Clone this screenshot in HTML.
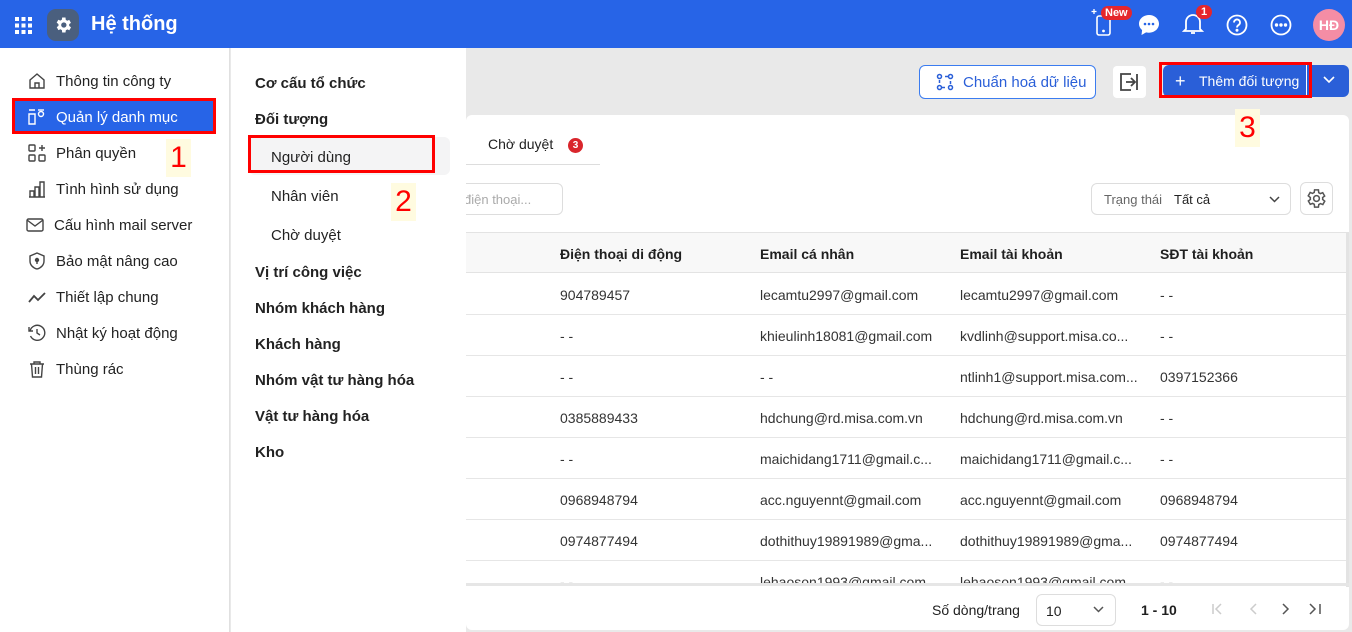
<!DOCTYPE html>
<html><head><meta charset="utf-8">
<style>
*{box-sizing:border-box;margin:0;padding:0}
body{width:1352px;height:632px;overflow:hidden;font-family:"Liberation Sans",sans-serif;background:#e9e9e9;position:relative;color:#1f1f1f}
.abs{position:absolute}
.hdr{left:0;top:0;width:1352px;height:48px;background:#2764e7}
.side{left:0;top:48px;width:230px;height:584px;background:#fff;border-right:1px solid #e0e0e0}
.sub{left:231px;top:48px;width:235px;height:584px;background:#fff}
.si{position:absolute;left:28px;font-size:15px;color:#222;display:flex;align-items:center}
.si svg{margin-right:10px}
.sm{position:absolute;font-size:15px;font-weight:bold;color:#222}
.sm2{position:absolute;left:271px;font-size:15px;color:#222}
.card{left:466px;top:115px;width:883px;height:515px;background:#fff;border-radius:6px}
.th{font-size:14px;font-weight:bold;position:absolute;top:246px}
.row{position:absolute;left:466px;width:880px;height:41px;border-bottom:1px solid #e6e6e6}
.c{position:absolute;font-size:14px;color:#333;top:13px}
.red{position:absolute;border:3px solid #f00}
.num{position:absolute;background:#fffbe0;color:#f00;font-size:30px;text-align:center}
svg{display:block}
</style></head><body>
<div class="abs hdr"></div>
<svg class="abs" style="left:15px;top:17px" width="17" height="17" viewBox="0 0 17 17" fill="#fff"><rect x="0" y="0" width="4" height="4"/><rect x="6.5" y="0" width="4" height="4"/><rect x="13" y="0" width="4" height="4"/><rect x="0" y="6.5" width="4" height="4"/><rect x="6.5" y="6.5" width="4" height="4"/><rect x="13" y="6.5" width="4" height="4"/><rect x="0" y="13" width="4" height="4"/><rect x="6.5" y="13" width="4" height="4"/><rect x="13" y="13" width="4" height="4"/></svg>
<div class="abs" style="left:47px;top:9px;width:32px;height:32px;border-radius:9px;background:#4a5f7e"></div>
<svg class="abs" style="left:53px;top:15px" width="20" height="20" viewBox="0 0 24 24"><path fill="#fff" d="M19.4 13a7.5 7.5 0 000-2l2.1-1.6-2-3.5-2.5 1a7.6 7.6 0 00-1.7-1L15 3h-4l-.4 2.7a7.6 7.6 0 00-1.7 1l-2.5-1-2 3.5L6.6 11a7.5 7.5 0 000 2l-2.1 1.6 2 3.5 2.5-1c.5.4 1.1.7 1.7 1L11 21h4l.4-2.7c.6-.3 1.2-.6 1.7-1l2.5 1 2-3.5z"/><circle cx="13" cy="12" r="3.2" fill="#4a5f7e"/></svg>
<div class="abs" style="left:91px;top:13px;font-size:20px;font-weight:bold;color:#fff">Hệ thống</div>
<svg class="abs" style="left:1090px;top:6px" width="30" height="32" viewBox="0 0 30 32" fill="none" stroke="#fff" stroke-width="1.6"><rect x="7" y="10" width="13" height="19" rx="2"/><circle cx="13.5" cy="25" r=".6" fill="#fff"/><path d="M4 3v5M1.5 5.5h5" stroke-width="1.3"/></svg>
<div class="abs" style="left:1101px;top:6px;background:#e5262c;color:#fff;font-size:11px;font-weight:bold;border-radius:8px;padding:1px 4px">New</div>
<svg class="abs" style="left:1138px;top:14px" width="22" height="22" viewBox="0 0 22 22"><path fill="#fff" d="M11 1C5.5 1 1 4.9 1 9.8c0 2.5 1.2 4.7 3.1 6.3L3.5 21l4.6-2.6c.9.2 1.9.3 2.9.3 5.5 0 10-3.9 10-8.9S16.5 1 11 1z"/><circle cx="7" cy="10" r="1.3" fill="#2764e7"/><circle cx="11" cy="10" r="1.3" fill="#2764e7"/><circle cx="15" cy="10" r="1.3" fill="#2764e7"/></svg>
<svg class="abs" style="left:1182px;top:12px" width="22" height="24" viewBox="0 0 22 24" fill="none" stroke="#fff" stroke-width="1.8"><path d="M4 17V10a7 7 0 0114 0v7l2 2H2z"/><path d="M9 21h4"/></svg>
<div class="abs" style="left:1196px;top:5px;background:#e5262c;color:#fff;font-size:11px;font-weight:bold;border-radius:8px;padding:1px 5px">1</div>
<svg class="abs" style="left:1226px;top:14px" width="22" height="22" viewBox="0 0 22 22" fill="none" stroke="#fff" stroke-width="1.8"><circle cx="11" cy="11" r="9.5"/><path d="M8 8.5a3 3 0 115 2.2c-1.3.8-2 1.3-2 2.8"/><circle cx="11" cy="16.3" r=".6" fill="#fff"/></svg>
<svg class="abs" style="left:1270px;top:14px" width="22" height="22" viewBox="0 0 22 22" fill="none" stroke="#fff" stroke-width="1.8"><circle cx="11" cy="11" r="9.5"/><circle cx="6.5" cy="11" r=".8" fill="#fff"/><circle cx="11" cy="11" r=".8" fill="#fff"/><circle cx="15.5" cy="11" r=".8" fill="#fff"/></svg>
<div class="abs" style="left:1313px;top:9px;width:32px;height:32px;border-radius:50%;background:#f48da5;color:#fff;font-weight:bold;font-size:14px;text-align:center;line-height:32px">HĐ</div>

<!-- top buttons -->
<div class="abs" style="left:919px;top:65px;width:177px;height:34px;border:1px solid #3b7cf0;border-radius:6px;background:#fff"></div>
<svg class="abs" style="left:936px;top:73px" width="18" height="18" viewBox="0 0 18 18" fill="none" stroke="#2a5fd8" stroke-width="1.5"><circle cx="3.5" cy="3.5" r="2"/><circle cx="14.5" cy="14.5" r="2"/><circle cx="3.5" cy="14.5" r="2"/><circle cx="14.5" cy="3.5" r="2"/><path d="M9 3.5h3M9 14.5h-3M3.5 7v3M14.5 11V8"/></svg>
<div class="abs" style="left:963px;top:74px;font-size:15px;color:#2a5fd8">Chuẩn hoá dữ liệu</div>
<div class="abs" style="left:1113px;top:66px;width:33px;height:32px;background:#fff;border-radius:4px"></div>
<svg class="abs" style="left:1120px;top:73px" width="19" height="18" viewBox="0 0 19 18" fill="none" stroke="#444" stroke-width="1.8"><path d="M11 1H1v16h10M1 1v16M17 1v16M6 9h9M11 5l4 4-4 4"/></svg>
<div class="abs" style="left:1163px;top:65px;width:186px;height:32px;background:#2a5fd8;border-radius:6px"></div>
<div class="abs" style="left:1306px;top:65px;width:1px;height:32px;background:#fff"></div>
<div class="abs" style="left:1175px;top:71px;font-size:18px;color:#fff">+</div>
<div class="abs" style="left:1199px;top:73px;font-size:14px;color:#fff">Thêm đối tượng</div>
<svg class="abs" style="left:1323px;top:76px" width="12" height="8" viewBox="0 0 12 8" fill="none" stroke="#fff" stroke-width="1.6"><path d="M1 1l5 5 5-5"/></svg>

<!-- card -->
<div class="abs card"></div>
<div class="abs" style="left:488px;top:136px;font-size:14px">Chờ duyệt</div>
<div class="abs" style="left:568px;top:138px;width:15px;height:15px;border-radius:50%;background:#d9262c;color:#fff;font-size:10px;font-weight:bold;text-align:center;line-height:15px">3</div>
<div class="abs" style="left:466px;top:164px;width:134px;height:1px;background:#ddd"></div>
<div class="abs" style="left:440px;top:183px;width:123px;height:32px;border:1px solid #ddd;border-radius:6px;background:#fff"></div>
<div class="abs" style="left:464px;top:192px;font-size:13px;color:#aaa">điện thoại...</div>
<div class="abs" style="left:1091px;top:183px;width:200px;height:32px;border:1px solid #ddd;border-radius:6px"></div>
<div class="abs" style="left:1104px;top:192px;font-size:13px;color:#666">Trạng thái</div>
<div class="abs" style="left:1174px;top:192px;font-size:13px;color:#222">Tất cả</div>
<svg class="abs" style="left:1269px;top:196px" width="11" height="7" viewBox="0 0 11 7" fill="none" stroke="#444" stroke-width="1.5"><path d="M1 1l4.5 4.5L10 1"/></svg>
<div class="abs" style="left:1300px;top:182px;width:33px;height:33px;border:1px solid #ddd;border-radius:6px"></div>
<svg class="abs" style="left:1305px;top:187px" width="23" height="23" viewBox="0 0 24 24" fill="none" stroke="#555" stroke-width="1.6"><path d="M19.4 13a7.5 7.5 0 000-2l2.1-1.6-2-3.5-2.5 1a7.6 7.6 0 00-1.7-1L15 3h-4l-.4 2.7a7.6 7.6 0 00-1.7 1l-2.5-1-2 3.5L6.6 11a7.5 7.5 0 000 2l-2.1 1.6 2 3.5 2.5-1c.5.4 1.1.7 1.7 1L11 21h4l.4-2.7c.6-.3 1.2-.6 1.7-1l2.5 1 2-3.5z" transform="translate(-1 0)"/><circle cx="12" cy="12" r="3"/></svg>

<div class="abs" style="left:466px;top:232px;width:880px;height:41px;background:#f8f8f8;border-top:1px solid #e3e3e3;border-bottom:1px solid #e3e3e3"></div>
<div class="th" style="left:560px">Điện thoại di động</div>
<div class="th" style="left:760px">Email cá nhân</div>
<div class="th" style="left:960px">Email tài khoản</div>
<div class="th" style="left:1160px">SĐT tài khoản</div>
<div class="abs" style="left:1346px;top:232px;width:3px;height:355px;background:#e3e3e3"></div>

<div class="row" style="top:274px"><div class="c" style="left:94px">904789457</div><div class="c" style="left:294px">lecamtu2997@gmail.com</div><div class="c" style="left:494px">lecamtu2997@gmail.com</div><div class="c" style="left:694px">- -</div></div>
<div class="row" style="top:315px"><div class="c" style="left:94px">- -</div><div class="c" style="left:294px">khieulinh18081@gmail.com</div><div class="c" style="left:494px">kvdlinh@support.misa.co...</div><div class="c" style="left:694px">- -</div></div>
<div class="row" style="top:356px"><div class="c" style="left:94px">- -</div><div class="c" style="left:294px">- -</div><div class="c" style="left:494px">ntlinh1@support.misa.com...</div><div class="c" style="left:694px">0397152366</div></div>
<div class="row" style="top:397px"><div class="c" style="left:94px">0385889433</div><div class="c" style="left:294px">hdchung@rd.misa.com.vn</div><div class="c" style="left:494px">hdchung@rd.misa.com.vn</div><div class="c" style="left:694px">- -</div></div>
<div class="row" style="top:438px"><div class="c" style="left:94px">- -</div><div class="c" style="left:294px">maichidang1711@gmail.c...</div><div class="c" style="left:494px">maichidang1711@gmail.c...</div><div class="c" style="left:694px">- -</div></div>
<div class="row" style="top:479px"><div class="c" style="left:94px">0968948794</div><div class="c" style="left:294px">acc.nguyennt@gmail.com</div><div class="c" style="left:494px">acc.nguyennt@gmail.com</div><div class="c" style="left:694px">0968948794</div></div>
<div class="row" style="top:520px"><div class="c" style="left:94px">0974877494</div><div class="c" style="left:294px">dothithuy19891989@gma...</div><div class="c" style="left:494px">dothithuy19891989@gma...</div><div class="c" style="left:694px">0974877494</div></div>
<div class="row" style="top:561px;height:22px;overflow:hidden;border:none"><div class="c" style="left:94px">- -</div><div class="c" style="left:294px">lehaoson1993@gmail.com</div><div class="c" style="left:494px">lehaoson1993@gmail.com</div><div class="c" style="left:694px">- -</div></div>
<div class="abs" style="left:466px;top:583px;width:883px;height:3px;background:#e6e6e6"></div>

<div class="abs" style="left:932px;top:602px;font-size:14px">Số dòng/trang</div>
<div class="abs" style="left:1036px;top:594px;width:80px;height:32px;border:1px solid #ddd;border-radius:6px"></div>
<div class="abs" style="left:1046px;top:603px;font-size:14px">10</div>
<svg class="abs" style="left:1093px;top:606px" width="11" height="7" viewBox="0 0 11 7" fill="none" stroke="#555" stroke-width="1.5"><path d="M1 1l4.5 4.5L10 1"/></svg>
<div class="abs" style="left:1141px;top:602px;font-size:14px;font-weight:bold">1 - 10</div>
<svg class="abs" style="left:1212px;top:603px" width="110" height="12" viewBox="0 0 110 12" fill="none" stroke-width="1.5"><path d="M1 1v10M9 1L4 6l5 5" stroke="#ccc"/><path d="M44 1l-5 5 5 5" stroke="#ccc"/><path d="M71 1l5 5-5 5" stroke="#555"/><path d="M98 1l5 5-5 5M108 1v10" stroke="#555"/></svg>

<!-- sidebar & submenu (drawn over card area) -->
<div class="abs side"></div>
<div class="abs sub"></div>
<div class="abs" style="left:14px;top:100px;width:201px;height:32px;background:#2764e7"></div>
<div class="si" style="top:72px"><svg width="18" height="18" viewBox="0 0 18 18" fill="none" stroke="#444" stroke-width="1.4"><path d="M2 8l7-6 7 6v8H2z"/><path d="M7 16v-5h4v5"/></svg>Thông tin công ty</div>
<div class="si" style="top:108px;color:#fff"><svg width="18" height="18" viewBox="0 0 18 18" fill="none" stroke="#fff" stroke-width="1.4"><path d="M1 2h6M1 16V6h6v10z"/><circle cx="13" cy="6" r="2.5"/><path d="M10 2h6"/></svg>Quản lý danh mục</div>
<div class="si" style="top:144px"><svg width="18" height="18" viewBox="0 0 18 18" fill="none" stroke="#444" stroke-width="1.4"><rect x="1" y="1" width="6" height="6" rx="1"/><rect x="1" y="11" width="6" height="6" rx="1"/><rect x="11" y="11" width="6" height="6" rx="1"/><path d="M14 1v6M11 4h6"/></svg>Phân quyền</div>
<div class="si" style="top:180px"><svg width="18" height="18" viewBox="0 0 18 18" fill="none" stroke="#444" stroke-width="1.4"><path d="M1 17h16M2 17v-6h4v6M7 17V7h4v10M12 17V2h4v15"/></svg>Tình hình sử dụng</div>
<div class="si" style="top:216px;left:26px"><svg width="18" height="18" viewBox="0 0 18 18" fill="none" stroke="#444" stroke-width="1.4"><rect x="1" y="3" width="16" height="12" rx="1.5"/><path d="M1 4l8 6 8-6"/></svg>Cấu hình mail server</div>
<div class="si" style="top:252px"><svg width="18" height="18" viewBox="0 0 18 18" fill="none" stroke="#444" stroke-width="1.4"><path d="M9 1l7 3v5c0 4-3 7-7 8-4-1-7-4-7-8V4z"/><circle cx="9" cy="8" r="1.5" fill="#444"/><path d="M9 9v3"/></svg>Bảo mật nâng cao</div>
<div class="si" style="top:288px"><svg width="18" height="18" viewBox="0 0 18 18" fill="none" stroke="#444" stroke-width="1.8"><path d="M1 14l5-6 4 4 7-7"/></svg>Thiết lập chung</div>
<div class="si" style="top:324px"><svg width="18" height="18" viewBox="0 0 18 18" fill="none" stroke="#444" stroke-width="1.4"><path d="M2.5 12A7.5 7.5 0 102 7"/><path d="M1 3v4h4M9 5v4l3 2"/></svg>Nhật ký hoạt động</div>
<div class="si" style="top:360px"><svg width="18" height="18" viewBox="0 0 18 18" fill="none" stroke="#444" stroke-width="1.4"><path d="M2 4h14M6 4V2h6v2M3.5 4l1 13h9l1-13M7.5 7v7M10.5 7v7"/></svg>Thùng rác</div>

<div class="sm" style="left:255px;top:75px">Cơ cấu tổ chức</div>
<div class="sm" style="left:255px;top:111px">Đối tượng</div>
<div class="abs" style="left:249px;top:137px;width:201px;height:38px;background:#f4f4f5;border-radius:6px"></div>
<div class="sm2" style="top:149px">Người dùng</div>
<div class="sm2" style="top:188px">Nhân viên</div>
<div class="sm2" style="top:227px">Chờ duyệt</div>
<div class="sm" style="left:255px;top:264px">Vị trí công việc</div>
<div class="sm" style="left:255px;top:300px">Nhóm khách hàng</div>
<div class="sm" style="left:255px;top:336px">Khách hàng</div>
<div class="sm" style="left:255px;top:372px">Nhóm vật tư hàng hóa</div>
<div class="sm" style="left:255px;top:408px">Vật tư hàng hóa</div>
<div class="sm" style="left:255px;top:444px">Kho</div>

<!-- annotations -->
<div class="red" style="left:12px;top:98px;width:204px;height:36px"></div>
<div class="num" style="left:166px;top:139px;width:25px;height:38px;line-height:38px">1</div>
<div class="red" style="left:248px;top:135px;width:187px;height:38px"></div>
<div class="num" style="left:391px;top:183px;width:25px;height:38px;line-height:38px">2</div>
<div class="red" style="left:1159px;top:62px;width:153px;height:36px"></div>
<div class="num" style="left:1235px;top:109px;width:25px;height:38px;line-height:38px">3</div>
</body></html>
